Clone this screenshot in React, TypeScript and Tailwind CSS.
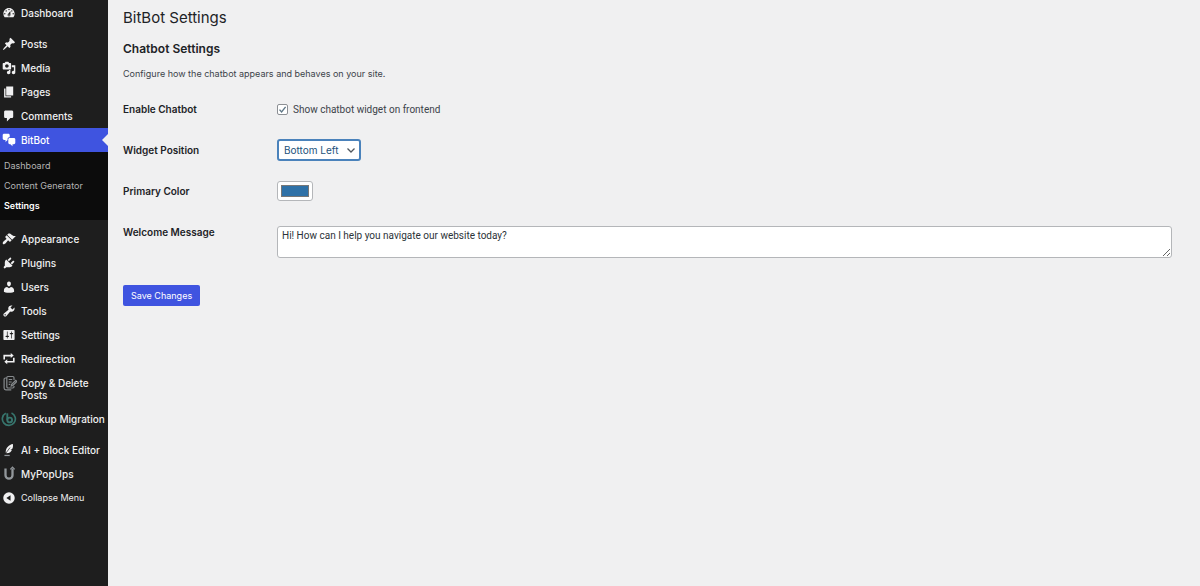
import { useState } from "react";
import type { ReactNode } from "react";
import clsx from "clsx";

const paths = {
  dashboard:
    "M3.76 16h12.48c1.1-1.37 1.76-3.11 1.76-5 0-4.42-3.58-8-8-8s-8 3.58-8 8c0 1.89.66 3.63 1.76 5zM10 4c.55 0 1 .45 1 1s-.45 1-1 1-1-.45-1-1 .45-1 1-1zM6 6c.55 0 1 .45 1 1s-.45 1-1 1-1-.45-1-1 .45-1 1-1zm8 0c.55 0 1 .45 1 1s-.45 1-1 1-1-.45-1-1 .45-1 1-1zm-5.37 5.55L12 7v6c0 1.1-.9 2-2 2s-2-.9-2-2c0-.57.24-1.08.63-1.45zM4 10c.55 0 1 .45 1 1s-.45 1-1 1-1-.45-1-1 .45-1 1-1zm12 0c.55 0 1 .45 1 1s-.45 1-1 1-1-.45-1-1 .45-1 1-1zm-5 3c0-.55-.45-1-1-1s-1 .45-1 1 .45 1 1 1 1-.45 1-1z",
  posts:
    "M10.44 3.02l1.82-1.82 6.36 6.35-1.83 1.82c-1.05-.68-2.48-.57-3.41.36l-.75.75c-.92.93-1.04 2.35-.35 3.41l-1.83 1.82-2.41-2.41-2.8 2.79c-.42.42-3.38 2.71-3.8 2.29s1.86-3.39 2.28-3.81l2.79-2.79L4.1 9.36l1.83-1.82c1.05.69 2.48.57 3.4-.36l.75-.75c.93-.92 1.05-2.35.36-3.41z",
  media:
    "M13 11V4c0-.55-.45-1-1-1h-1.67L9 1H5L3.67 3H2c-.55 0-1 .45-1 1v7c0 .55.45 1 1 1h10c.55 0 1-.45 1-1zM7 4.5c1.38 0 2.5 1.12 2.5 2.5S8.38 9.5 7 9.5 4.5 8.38 4.5 7 5.62 4.5 7 4.5zM14 6h5v10.5c0 1.38-1.12 2.5-2.5 2.5S14 17.88 14 16.5s1.12-2.5 2.5-2.5c.17 0 .34.02.5.05V9h-3V6zm-4 8.05V13h2v3.5c0 1.38-1.12 2.5-2.5 2.5S7 17.88 7 16.5 8.12 14 9.5 14c.17 0 .34.02.5.05z",
  pages: "M6 15V2h10v13H6zm-1 1h8v2H3V5h2v11z",
  comments:
    "M5 2h9c1.1 0 2 .9 2 2v7c0 1.1-.9 2-2 2h-2l-5 5v-5H5c-1.1 0-2-.9-2-2V4c0-1.1.9-2 2-2z",
  chat:
    "M11 6h-.82C9.07 6 8 7.2 8 8.16V10l-3 3v-3H3c-1.1 0-2-.9-2-2V3c0-1.1.9-2 2-2h6c1.1 0 2 .9 2 2v3zm0 1h6c1.1 0 2 .9 2 2v5c0 1.1-.9 2-2 2h-2v3l-3-3h-1c-1.1 0-2-.9-2-2V9c0-1.1.9-2 2-2z",
  appearance:
    "M14.48 11.06L7.41 3.99l1.5-1.5c.5-.56 2.3-.47 3.51.32 1.21.8 1.43 1.28 2.91 2.1 1.18.64 2.45 1.26 4.45.85zm-.71.71L6.7 4.7 4.93 6.47c-.39.39-.39 1.02 0 1.41l1.06 1.06c.39.39.39 1.03 0 1.42-.6.6-1.43 1.11-2.21 1.69-.35.26-.7.53-1.01.84C1.43 14.23.4 16.08 1.4 17.07c.99 1 2.84-.03 4.18-1.36.31-.31.58-.66.85-1.02.57-.78 1.08-1.61 1.69-2.21.39-.39 1.02-.39 1.41 0l1.06 1.06c.39.39 1.02.39 1.41 0z",
  plugins:
    "M13.11 4.36L9.87 7.6 8 5.73l3.24-3.24c.35-.34 1.05-.2 1.56.32.52.51.66 1.21.31 1.55zm-8 1.77l.91-1.12 9.01 9.01-1.19.84c-.71.71-2.63 1.16-3.82 1.16H6.14L4.9 17.26c-.59.59-1.54.59-2.12 0-.59-.58-.59-1.53 0-2.12l1.24-1.24v-3.88c0-1.13.4-3.19 1.09-3.89zm7.26 3.97l3.24-3.24c.34-.35 1.04-.21 1.55.31.52.51.66 1.21.31 1.55l-3.24 3.25z",
  users:
    "M10 9.25c-2.27 0-2.73-3.44-2.73-3.44C7 4.02 7.82 2 9.97 2c2.16 0 2.98 2.02 2.71 3.81 0 0-.41 3.44-2.68 3.44zm0 2.57L12.72 10c2.39 0 4.52 2.33 4.52 4.53v2.49s-3.65 1.13-7.24 1.13c-3.65 0-7.24-1.13-7.24-1.13v-2.49c0-2.25 1.94-4.48 4.47-4.48z",
  tools:
    "M16.68 9.77c-1.34 1.34-3.3 1.67-4.95.99l-5.41 6.52c-.99.99-2.59.99-3.58 0s-.99-2.59 0-3.57l6.52-5.42c-.68-1.65-.35-3.61.99-4.95 1.28-1.28 3.12-1.62 4.72-1.06l-2.89 2.89 2.82 2.82 2.86-2.87c.53 1.58.18 3.39-1.08 4.65zM3.81 16.21c.4.39 1.04.39 1.43 0 .4-.4.4-1.04 0-1.43-.39-.4-1.03-.4-1.43 0-.39.39-.39 1.03 0 1.43z",
  settings:
    "M18 16V4c0-.55-.45-1-1-1H3c-.55 0-1 .45-1 1v12c0 .55.45 1 1 1h14c.55 0 1-.45 1-1zM8 11h1c.55 0 1 .45 1 1s-.45 1-1 1H8v1.5c0 .28-.22.5-.5.5s-.5-.22-.5-.5V13H6c-.55 0-1-.45-1-1s.45-1 1-1h1V5.5c0-.28.22-.5.5-.5s.5.22.5.5V11zm5-2h-1c-.55 0-1-.45-1-1s.45-1 1-1h1V5.5c0-.28.22-.5.5-.5s.5.22.5.5V7h1c.55 0 1 .45 1 1s-.45 1-1 1h-1v5.5c0 .28-.22.5-.5.5s-.5-.22-.5-.5V9z",
  redirection:
    "M4.300 10.800H2V4h10.500V1.500L16.700 5l-4.200 3.500V6.300H4.300zM15.700 8.200H18V15H7.500v2.500L3.300 14l4.200-3.500v2.200h8.200z",
  collapse: "M10 1.8a8.200 8.200 0 1 1 0 16.400 8.200 8.200 0 0 1 0-16.400zm2.200 12.200V6L6.200 10z",
};

function Glyph({ name }: { name: keyof typeof paths }) {
  return (
    <svg viewBox="0 0 20 20" className="h-3.5 w-3.5 fill-current" aria-hidden="true">
      <path fillRule={name === "collapse" ? "evenodd" : undefined} d={paths[name]} />
    </svg>
  );
}

function CopyIcon() {
  return (
    <svg viewBox="0 0 16 16" className="h-4 w-4 fill-none stroke-[#85898c]" strokeWidth="1.2" aria-hidden="true">
      <path d="M13 11v.8c0 .7-.5 1.200-1.200 1.200H7c-.7 0-1.200-.5-1.200-1.200V2.700c0-.7.5-1.200 1.200-1.200h4.800c.7 0 1.200.5 1.200 1.200V5" />
      <path d="M5.800 3H4.400c-.8 0-1.300.5-1.300 1.300v8.800c0 1 .7 1.700 1.700 1.700h5.500" />
      <path d="M7.700 4.500h3.500M7.700 7h3M7.700 9.300h1.600M10.300 11l.4-1.600 4-4 1.100 1.100-4 4z" />
    </svg>
  );
}

function BackupIcon() {
  return (
    <svg viewBox="0 0 16 16" className="h-4 w-4 fill-none stroke-[#37756d]" aria-hidden="true">
      <path d="M4.800 2.200A6.500 6.500 0 1 0 10.500 2" strokeWidth="1.7" />
      <path d="M6.300 2.300v6.500" strokeWidth="1.9" />
      <circle cx="8.700" cy="9" r="2.400" strokeWidth="1.9" />
    </svg>
  );
}

function QuillIcon() {
  return (
    <svg viewBox="0 0 20 20" className="h-3.5 w-3.5" aria-hidden="true">
      <path d="M15.500 1.500C10 2.500 5.500 6.500 5.200 13.500l1.300 1.300c4.500-.3 7-2.300 7.700-5l-2.200.2 3-2c.8-2 .9-4.500.5-6.500z" fill="currentColor" />
      <path d="M4 16.500 11.500 6.500" stroke="#1e1e1e" strokeWidth="1" />
      <path d="M3.500 17.800h7.500" stroke="#92979b" strokeWidth="1.8" />
    </svg>
  );
}

function PopUpsIcon() {
  return (
    <svg viewBox="0 0 16 16" className="h-4 w-4 fill-none stroke-[#92979b]" aria-hidden="true">
      <path d="M4.500 2.500v6.700a3.500 3.500 0 0 0 7 0V2.500" strokeWidth="2.3" />
      <path d="M9.300 3.300 11.500 1l2.200 2.300" strokeWidth="1.2" />
    </svg>
  );
}

interface MenuItem {
  label: string;
  icon: ReactNode;
}

const mainItems: MenuItem[] = [
  { label: "Posts", icon: <Glyph name="posts" /> },
  { label: "Media", icon: <Glyph name="media" /> },
  { label: "Pages", icon: <Glyph name="pages" /> },
  { label: "Comments", icon: <Glyph name="comments" /> },
];

const subItems = ["Dashboard", "Content Generator", "Settings"];

const adminItems: MenuItem[] = [
  { label: "Appearance", icon: <Glyph name="appearance" /> },
  { label: "Plugins", icon: <Glyph name="plugins" /> },
  { label: "Users", icon: <Glyph name="users" /> },
  { label: "Tools", icon: <Glyph name="tools" /> },
  { label: "Settings", icon: <Glyph name="settings" /> },
  { label: "Redirection", icon: <Glyph name="redirection" /> },
  { label: "Copy & Delete Posts", icon: <CopyIcon /> },
  { label: "Backup Migration", icon: <BackupIcon /> },
];

const extraItems: MenuItem[] = [
  { label: "AI + Block Editor", icon: <QuillIcon /> },
  { label: "MyPopUps", icon: <PopUpsIcon /> },
];

function MenuLink({ item, active }: { item: MenuItem; active?: boolean }) {
  return (
    <a
      href="#"
      className={clsx("relative flex items-start", active ? "bg-[#3f54e0] text-white" : "text-[#f0f0f1]")}
    >
      <span className="flex h-6 w-[18px] shrink-0 items-center justify-center">{item.icon}</span>
      <span className="py-[6px] pl-[3px] leading-3">{item.label}</span>
      {active && (
        <span className="absolute top-1/2 right-0 -translate-y-1/2 border-y-[6px] border-r-[6px] border-y-transparent border-r-[#f0f0f1]" />
      )}
    </a>
  );
}

function MenuGroup({ items }: { items: MenuItem[] }) {
  return (
    <ul>
      {items.map((item) => (
        <li key={item.label}>
          <MenuLink item={item} />
        </li>
      ))}
    </ul>
  );
}

function Sidebar() {
  return (
    <nav className="w-[108px] shrink-0 bg-[#1e1e1e] pt-px text-[10px] font-medium">
      <MenuLink item={{ label: "Dashboard", icon: <Glyph name="dashboard" /> }} />
      <div className="mt-[7px]">
        <MenuGroup items={mainItems} />
        <MenuLink active item={{ label: "BitBot", icon: <Glyph name="chat" /> }} />
        <ul className="bg-[#0c0c0c] px-1 py-1">
          {subItems.map((label) => (
            <li key={label}>
              <a
                href="#"
                className={clsx(
                  "block text-[9px] leading-5",
                  label === "Settings" ? "font-semibold text-white" : "font-normal text-[#b4b4b4]"
                )}
              >
                {label}
              </a>
            </li>
          ))}
        </ul>
      </div>
      <div className="mt-[7px]">
        <MenuGroup items={adminItems} />
      </div>
      <div className="mt-[7px]">
        <MenuGroup items={extraItems} />
        <button type="button" className="flex items-center text-left text-[9px] font-normal text-[#f0f0f1]">
          <span className="flex h-6 w-[18px] items-center justify-center">
            <Glyph name="collapse" />
          </span>
          <span className="pl-[3px]">Collapse Menu</span>
        </button>
      </div>
    </nav>
  );
}

function Field({ id, label, children }: { id: string; label: string; children: ReactNode }) {
  return (
    <div className="grid min-h-[22px] grid-cols-[154px_minmax(0,1fr)] items-start">
      <label htmlFor={id} className="text-[10px] leading-[22px] font-semibold text-[#1d2327]">
        {label}
      </label>
      <div>{children}</div>
    </div>
  );
}

export default function App() {
  const [enabled, setEnabled] = useState(true);
  const [position, setPosition] = useState("Bottom Left");
  const [color, setColor] = useState("#2f71a7");
  const [message, setMessage] = useState("Hi! How can I help you navigate our website today?");

  return (
    <div className="flex min-h-screen bg-[#f0f0f1] font-[Inter,sans-serif] text-[#3c434a]">
      <Sidebar />
      <main className="min-w-0 flex-1 pt-2 pr-7 pl-[15px]">
        <h1 className="text-[15px] leading-5 text-[#1d2327]">BitBot Settings</h1>
        <h2 className="mt-[13px] text-xs leading-4 font-semibold text-[#1d2327]">Chatbot Settings</h2>
        <p className="mt-[11px] text-[9px] leading-3">Configure how the chatbot appears and behaves on your site.</p>

        <form onSubmit={(e) => e.preventDefault()}>
          <div className="mt-[18px] flex flex-col gap-[19px]">
            <Field id="enabled" label="Enable Chatbot">
              <label className="flex h-[22px] items-center gap-[5px] font-[Roboto,sans-serif] text-[10px]">
                <span className="relative flex h-[11px] w-[11px]">
                  <input
                    id="enabled"
                    type="checkbox"
                    checked={enabled}
                    onChange={(e) => setEnabled(e.target.checked)}
                    className="h-[11px] w-[11px] appearance-none rounded-[2px] border border-[#8c8f94] bg-white"
                  />
                  {enabled && (
                    <svg viewBox="0 0 11 11" className="pointer-events-none absolute inset-0 fill-none stroke-[#5f7787]" strokeWidth="1.4">
                      <path d="M2.500 5.600 4.600 7.900 8.600 2.900" />
                    </svg>
                  )}
                </span>
                Show chatbot widget on frontend
              </label>
            </Field>

            <Field id="position" label="Widget Position">
              <div className="relative w-[84px]">
                <select
                  id="position"
                  value={position}
                  onChange={(e) => setPosition(e.target.value)}
                  className="block h-[22px] w-full appearance-none rounded-[3px] border-2 border-[#4a82bb] bg-white pl-[5px] text-[10px] text-[#23527c]"
                >
                  <option>Bottom Left</option>
                  <option>Bottom Right</option>
                </select>
                <svg viewBox="0 0 10 10" className="pointer-events-none absolute top-[6px] right-[5px] h-2.5 w-2.5 fill-none stroke-[#50575e]" strokeWidth="1.3">
                  <path d="M1.500 3.500 5 7l3.500-3.500" />
                </svg>
              </div>
            </Field>

            <Field id="color" label="Primary Color">
              <input
                id="color"
                type="color"
                value={color}
                onChange={(e) => setColor(e.target.value)}
                className="mt-px block h-5 w-9 appearance-none rounded-[3px] border border-[#b4b6b9] bg-white px-[3px] py-[3px] [&::-webkit-color-swatch]:rounded-none [&::-webkit-color-swatch]:border [&::-webkit-color-swatch]:border-[#777777] [&::-webkit-color-swatch-wrapper]:p-0"
              />
            </Field>

            <Field id="message" label="Welcome Message">
              <textarea
                id="message"
                rows={2}
                value={message}
                onChange={(e) => setMessage(e.target.value)}
                className="mt-[5px] block h-8 w-full rounded-[3px] border border-[#b4b6b9] bg-white px-1 py-[2px] font-[Roboto,sans-serif] text-[10px] leading-[14px] text-[#2c3338]"
              />
            </Field>
          </div>

          <button type="submit" className="mt-[27px] h-[21px] rounded-[2px] bg-[#3f54e0] px-2 text-[9px] text-white">
            Save Changes
          </button>
        </form>
      </main>
    </div>
  );
}
